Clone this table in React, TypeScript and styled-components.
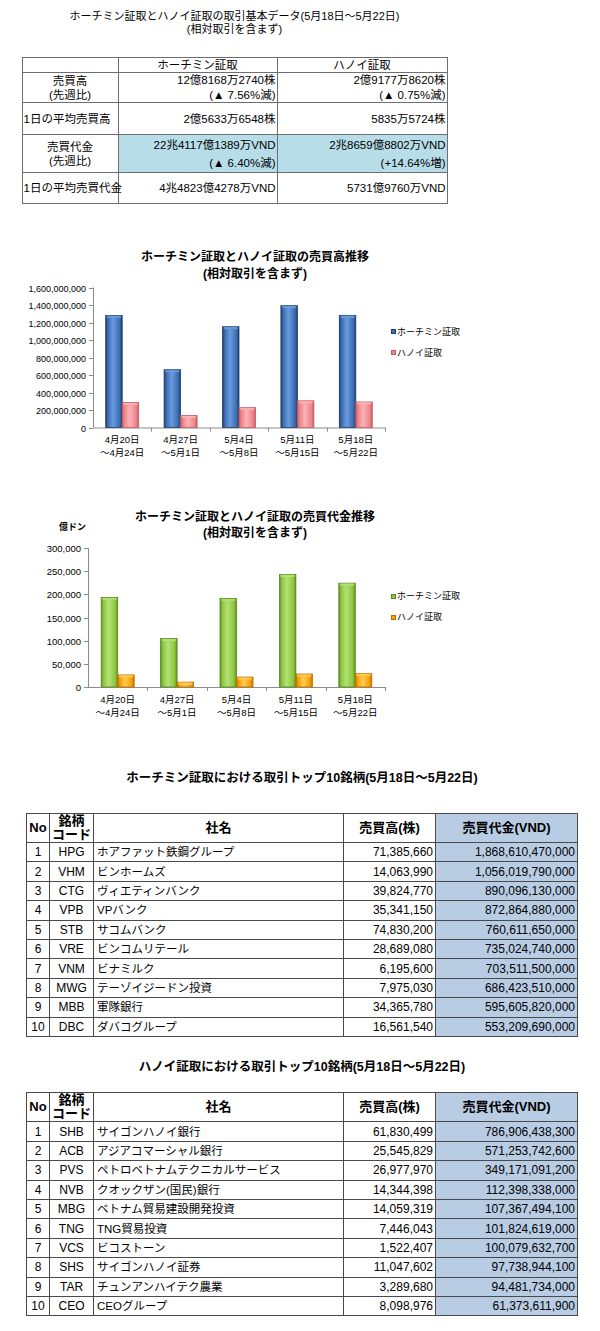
import React from "react";
import styled, { createGlobalStyle } from "styled-components";

const FONT = `"Liberation Sans", "Noto Sans CJK JP", sans-serif`;

const GlobalStyle = createGlobalStyle`
  html, body { margin: 0; padding: 0; background: #ffffff; }
  body { font-family: ${FONT}; color: #000000; }
  #root { width: 600px; }
`;

const Page = styled.main`
  width: 600px;
  min-height: 1331px;
  display: flex;
  flex-direction: column;
  align-items: flex-start;
  background: #ffffff;
`;

/* ---------- Summary ---------- */

const SummarySection = styled.section`
  margin: 10px 0 0 22px;
  width: 425px;
  display: flex;
  flex-direction: column;
  align-items: center;
`;

const SummaryTitle = styled.h1`
  margin: 0;
  font-size: 11px;
  font-weight: normal;
  line-height: 13px;
  text-align: center;
`;

const Line = styled.span`
  display: block;
`;

const SummaryTable = styled.table`
  margin-top: 21px;
  width: 425px;
  border-collapse: collapse;
  table-layout: fixed;
  font-size: 11.5px;
`;

const Col = styled.col<{ $w: number }>`
  width: ${(p) => p.$w}px;
`;

const Row = styled.tr<{ $h: number }>`
  height: ${(p) => p.$h}px;
`;

const SumCell = styled.td<{ $align?: "left" | "center" | "right"; $blue?: boolean; $lh?: number }>`
  border: 1px solid #6e6e6e;
  padding: 0 1px;
  text-align: ${(p) => p.$align ?? "right"};
  background: ${(p) => (p.$blue ? "#b7dde8" : "#ffffff")};
  line-height: ${(p) => p.$lh ?? 14}px;
  vertical-align: middle;
  white-space: nowrap;
`;

/* ---------- Charts ---------- */

const ChartSection = styled.section<{ $mt: number }>`
  margin: ${(p) => p.$mt}px 0 0 20px;
  width: 470px;
  display: flex;
  flex-direction: column;
`;

const ChartHead = styled.header`
  display: grid;
  grid-template-columns: 1fr auto 1fr;
  align-items: center;
`;

const ChartTitle = styled.h2<{ $lh: number }>`
  grid-column: 2;
  grid-row: 1;
  margin: 0;
  font-size: 12px;
  font-weight: bold;
  line-height: ${(p) => p.$lh}px;
  text-align: center;
`;

const UnitLabel = styled.span`
  grid-column: 1;
  grid-row: 1;
  justify-self: start;
  padding: 3px 0 0 39px;
  font-size: 9px;
  font-weight: bold;
  line-height: 12px;
  white-space: nowrap;
`;

const ChartBody = styled.div`
  display: flex;
  align-items: flex-start;
`;

const Legend = styled.ul<{ $mt: number }>`
  list-style: none;
  margin: ${(p) => p.$mt}px 0 0 3px;
  padding: 0;
  display: flex;
  flex-direction: column;
  gap: 9px;
`;

const LegendItem = styled.li`
  display: flex;
  align-items: center;
  gap: 1px;
  font-size: 9px;
  line-height: 12px;
  white-space: nowrap;
`;

const Swatch = styled.span<{ $c: string; $edge: string }>`
  width: 5px;
  height: 5px;
  box-sizing: border-box;
  background: ${(p) => p.$c};
  border: 1px solid ${(p) => p.$edge};
`;

type Series = { name: string; values: number[]; light: string; mid: string; dark: string };

type ChartProps = {
  id: string;
  width: number;
  height: number;
  axisX: number;
  top: number;
  base: number;
  right: number;
  labelRight: number;
  max: number;
  steps: number;
  fontSize: number;
  series: Series[];
  cats: [string, string][];
  catY1: number;
  catY2: number;
};

const AXIS = "#8c8c8c";

function BarChart(props: ChartProps) {
  const { id, width, height, axisX, top, base, right, labelRight, max, steps, fontSize, series, cats, catY1, catY2 } = props;
  const gw = (right - axisX) / cats.length;
  const bw = 16.5;
  const ticks = Array.from({ length: steps + 1 }, (_, i) => (max * i) / steps);
  const yOf = (v: number) => base - ((base - top) * v) / max;
  return (
    <svg width={width} height={height} viewBox={`0 0 ${width} ${height}`} fontFamily={FONT} style={{ display: "block" }}>
      <defs>
        {series.map((s, k) => (
          <linearGradient key={k} id={`${id}-g${k}`} x1="0" x2="1" y1="0" y2="0">
            <stop offset="0" stopColor={s.dark} />
            <stop offset="0.14" stopColor={s.mid} />
            <stop offset="0.45" stopColor={s.light} />
            <stop offset="0.85" stopColor={s.mid} />
            <stop offset="1" stopColor={s.dark} />
          </linearGradient>
        ))}
      </defs>
      <line x1={axisX + 0.5} y1={top} x2={axisX + 0.5} y2={base} stroke={AXIS} strokeWidth={1} />
      <line x1={axisX} y1={base + 0.5} x2={right} y2={base + 0.5} stroke={AXIS} strokeWidth={1} />
      {ticks.map((t, i) => {
        const y = Math.round(yOf(t)) + 0.5;
        return (
          <g key={i}>
            <line x1={axisX - 4} y1={y} x2={axisX} y2={y} stroke={AXIS} strokeWidth={1} />
            <text x={labelRight} y={y} fontSize={fontSize} textAnchor="end" dominantBaseline="central" fill="#000">
              {t.toLocaleString("en-US")}
            </text>
          </g>
        );
      })}
      {cats.map((_, i) => {
        const x = Math.round(axisX + gw * (i + 1)) + 0.5;
        return <line key={i} x1={x} y1={base} x2={x} y2={base + 4} stroke={AXIS} strokeWidth={1} />;
      })}
      {cats.map((c, i) => {
        const cx = axisX + gw * (i + 0.5);
        return (
          <g key={i}>
            {series.map((s, k) => {
              const x = cx - bw + k * bw;
              const y = yOf(s.values[i]);
              const h = base - y;
              return (
                <g key={k}>
                  <rect x={x} y={y} width={bw} height={h} fill={`url(#${id}-g${k})`} stroke={s.dark} strokeWidth={0.8} />
                  <rect x={x + 1} y={y + 0.4} width={bw - 2} height={2.2} rx={1} fill={s.light} opacity={0.85} />
                </g>
              );
            })}
            <text x={cx} y={catY1} fontSize={9.5} textAnchor="middle" dominantBaseline="central" fill="#000">
              {c[0]}
            </text>
            <text x={cx} y={catY2} fontSize={9.5} textAnchor="middle" dominantBaseline="central" fill="#000">
              {c[1]}
            </text>
          </g>
        );
      })}
    </svg>
  );
}

const CATS: [string, string][] = [
  ["4月20日", "～4月24日"],
  ["4月27日", "～5月1日"],
  ["5月4日", "～5月8日"],
  ["5月11日", "～5月15日"],
  ["5月18日", "～5月22日"],
];

const VOLUME: Series[] = [
  { name: "ホーチミン証取", values: [1.281e9, 0.66e9, 1.152e9, 1.392e9, 1281682740], light: "#6a9be0", mid: "#3b6db1", dark: "#1e3d68" },
  { name: "ハノイ証取", values: [0.286e9, 0.137e9, 0.229e9, 0.305e9, 291778620], light: "#fab3b7", mid: "#ef8489", dark: "#c55c62" },
];

const VALUE: Series[] = [
  { name: "ホーチミン証取", values: [193000, 104500, 191000, 243000, 224117], light: "#b3e274", mid: "#8cc63f", dark: "#5b8a1d" },
  { name: "ハノイ証取", values: [26000, 10500, 21500, 28000, 28659], light: "#ffcb55", mid: "#f4a000", dark: "#bf7000" },
];

/* ---------- Ranking tables ---------- */

const RankSection = styled.section<{ $mt: number; $gap: number }>`
  margin: ${(p) => p.$mt}px 0 0 26px;
  width: 552px;
  display: flex;
  flex-direction: column;
  align-items: center;
  gap: ${(p) => p.$gap}px;
`;

const RankTitle = styled.h2`
  margin: 0;
  font-size: 12.5px;
  font-weight: bold;
  line-height: 18px;
  white-space: nowrap;
`;

const RankTable = styled.table`
  width: 552px;
  border-collapse: collapse;
  table-layout: fixed;
  font-size: 12px;
`;

const RankHead = styled.th<{ $blue?: boolean }>`
  border: 1px solid #4a4a4a;
  padding: 0;
  font-size: 13px;
  font-weight: bold;
  line-height: 14px;
  text-align: center;
  vertical-align: middle;
  background: ${(p) => (p.$blue ? "#b8cce4" : "#ffffff")};
`;

const RankCell = styled.td<{ $align: "left" | "center" | "right"; $blue?: boolean; $jp?: boolean }>`
  border: 1px solid #4a4a4a;
  padding: ${(p) => (p.$align === "left" ? "0 0 0 3px" : p.$align === "right" ? "0 2px 0 0" : "0")};
  text-align: ${(p) => p.$align};
  font-size: ${(p) => (p.$jp ? 11.5 : 12)}px;
  line-height: 14px;
  vertical-align: middle;
  white-space: nowrap;
  overflow: hidden;
  background: ${(p) => (p.$blue ? "#b8cce4" : "#ffffff")};
`;

type RankRow = [string, string, string, string];

const HCM_ROWS: RankRow[] = [
  ["HPG", "ホアファット鉄鋼グループ", "71,385,660", "1,868,610,470,000"],
  ["VHM", "ビンホームズ", "14,063,990", "1,056,019,790,000"],
  ["CTG", "ヴィエティンバンク", "39,824,770", "890,096,130,000"],
  ["VPB", "VPバンク", "35,341,150", "872,864,880,000"],
  ["STB", "サコムバンク", "74,830,200", "760,611,650,000"],
  ["VRE", "ビンコムリテール", "28,689,080", "735,024,740,000"],
  ["VNM", "ビナミルク", "6,195,600", "703,511,500,000"],
  ["MWG", "テーゾイジードン投資", "7,975,030", "686,423,510,000"],
  ["MBB", "軍隊銀行", "34,365,780", "595,605,820,000"],
  ["DBC", "ダバコグループ", "16,561,540", "553,209,690,000"],
];

const HN_ROWS: RankRow[] = [
  ["SHB", "サイゴンハノイ銀行", "61,830,499", "786,906,438,300"],
  ["ACB", "アジアコマーシャル銀行", "25,545,829", "571,253,742,600"],
  ["PVS", "ペトロベトナムテクニカルサービス", "26,977,970", "349,171,091,200"],
  ["NVB", "クオックザン(国民)銀行", "14,344,398", "112,398,338,000"],
  ["MBG", "ベトナム貿易建設開発投資", "14,059,319", "107,367,494,100"],
  ["TNG", "TNG貿易投資", "7,446,043", "101,824,619,000"],
  ["VCS", "ビコストーン", "1,522,407", "100,079,632,700"],
  ["SHS", "サイゴンハノイ証券", "11,047,602", "97,738,944,100"],
  ["TAR", "チュンアンハイテク農業", "3,289,680", "94,481,734,000"],
  ["CEO", "CEOグループ", "8,098,976", "61,373,611,900"],
];

function Ranking({ title, rows, mt, gap }: { title: string; rows: RankRow[]; mt: number; gap: number }) {
  return (
    <RankSection $mt={mt} $gap={gap}>
      <RankTitle>{title}</RankTitle>
      <RankTable>
        <colgroup>
          <Col $w={23} />
          <Col $w={44} />
          <Col $w={250} />
          <Col $w={92} />
          <Col $w={142} />
        </colgroup>
        <thead>
          <Row $h={29}>
            <RankHead>No</RankHead>
            <RankHead>
              <Line>銘柄</Line>
              <Line>コード</Line>
            </RankHead>
            <RankHead>社名</RankHead>
            <RankHead>売買高(株)</RankHead>
            <RankHead $blue>売買代金(VND)</RankHead>
          </Row>
        </thead>
        <tbody>
          {rows.map((r, i) => (
            <Row key={r[0]} $h={19.4}>
              <RankCell $align="center">{i + 1}</RankCell>
              <RankCell $align="center">{r[0]}</RankCell>
              <RankCell $align="left" $jp>
                {r[1]}
              </RankCell>
              <RankCell $align="right">{r[2]}</RankCell>
              <RankCell $align="right" $blue>
                {r[3]}
              </RankCell>
            </Row>
          ))}
        </tbody>
      </RankTable>
    </RankSection>
  );
}

export default function App() {
  return (
    <Page>
      <GlobalStyle />
      <SummarySection>
        <SummaryTitle>
          <Line>ホーチミン証取とハノイ証取の取引基本データ(5月18日～5月22日)</Line>
          <Line>(相対取引を含まず)</Line>
        </SummaryTitle>
        <SummaryTable>
          <colgroup>
            <Col $w={96} />
            <Col $w={159} />
            <Col $w={170} />
          </colgroup>
          <tbody>
            <Row $h={15}>
              <SumCell $align="center" />
              <SumCell $align="center">ホーチミン証取</SumCell>
              <SumCell $align="center">ハノイ証取</SumCell>
            </Row>
            <Row $h={30}>
              <SumCell $align="center">
                <Line>売買高</Line>
                <Line>(先週比)</Line>
              </SumCell>
              <SumCell $lh={14.5}>
                <Line>12億8168万2740株</Line>
                <Line>(▲ 7.56%減)</Line>
              </SumCell>
              <SumCell $lh={14.5}>
                <Line>2億9177万8620株</Line>
                <Line>(▲ 0.75%減)</Line>
              </SumCell>
            </Row>
            <Row $h={32}>
              <SumCell $align="left">1日の平均売買高</SumCell>
              <SumCell>2億5633万6548株</SumCell>
              <SumCell>5835万5724株</SumCell>
            </Row>
            <Row $h={38}>
              <SumCell $align="center">
                <Line>売買代金</Line>
                <Line>(先週比)</Line>
              </SumCell>
              <SumCell $blue $lh={18}>
                <Line>22兆4117億1389万VND</Line>
                <Line>(▲ 6.40%減)</Line>
              </SumCell>
              <SumCell $blue $lh={18}>
                <Line>2兆8659億8802万VND</Line>
                <Line>(+14.64%増)</Line>
              </SumCell>
            </Row>
            <Row $h={31}>
              <SumCell $align="left">1日の平均売買代金</SumCell>
              <SumCell>4兆4823億4278万VND</SumCell>
              <SumCell>5731億9760万VND</SumCell>
            </Row>
          </tbody>
        </SummaryTable>
      </SummarySection>

      <ChartSection $mt={44.5}>
        <ChartHead>
          <ChartTitle $lh={17}>
            <Line>ホーチミン証取とハノイ証取の売買高推移</Line>
            <Line>(相対取引を含まず)</Line>
          </ChartTitle>
        </ChartHead>
        <ChartBody>
          <BarChart
            id="vol"
            width={368}
            height={180}
            axisX={73}
            top={4.5}
            base={144.5}
            right={365}
            labelRight={66}
            max={1600000000}
            steps={8}
            fontSize={9}
            series={VOLUME}
            cats={CATS}
            catY1={156.5}
            catY2={169.5}
          />
          <Legend $mt={43}>
            {VOLUME.map((s) => (
              <LegendItem key={s.name}>
                <Swatch $c={s.mid} $edge={s.dark} />
                {s.name}
              </LegendItem>
            ))}
          </Legend>
        </ChartBody>
      </ChartSection>

      <ChartSection $mt={46.5}>
        <ChartHead>
          <UnitLabel>億ドン</UnitLabel>
          <ChartTitle $lh={16}>
            <Line>ホーチミン証取とハノイ証取の売買代金推移</Line>
            <Line>(相対取引を含まず)</Line>
          </ChartTitle>
        </ChartHead>
        <ChartBody>
          <BarChart
            id="val"
            width={368}
            height={179}
            axisX={68}
            top={7}
            base={146}
            right={365}
            labelRight={61}
            max={300000}
            steps={6}
            fontSize={9.5}
            series={VALUE}
            cats={CATS}
            catY1={158}
            catY2={171}
          />
          <Legend $mt={49}>
            {VALUE.map((s) => (
              <LegendItem key={s.name}>
                <Swatch $c={s.mid} $edge={s.dark} />
                {s.name}
              </LegendItem>
            ))}
          </Legend>
        </ChartBody>
      </ChartSection>

      <Ranking title="ホーチミン証取における取引トップ10銘柄(5月18日～5月22日)" rows={HCM_ROWS} mt={49} gap={26} />
      <Ranking title="ハノイ証取における取引トップ10銘柄(5月18日～5月22日)" rows={HN_ROWS} mt={21.5} gap={16} />
    </Page>
  );
}
